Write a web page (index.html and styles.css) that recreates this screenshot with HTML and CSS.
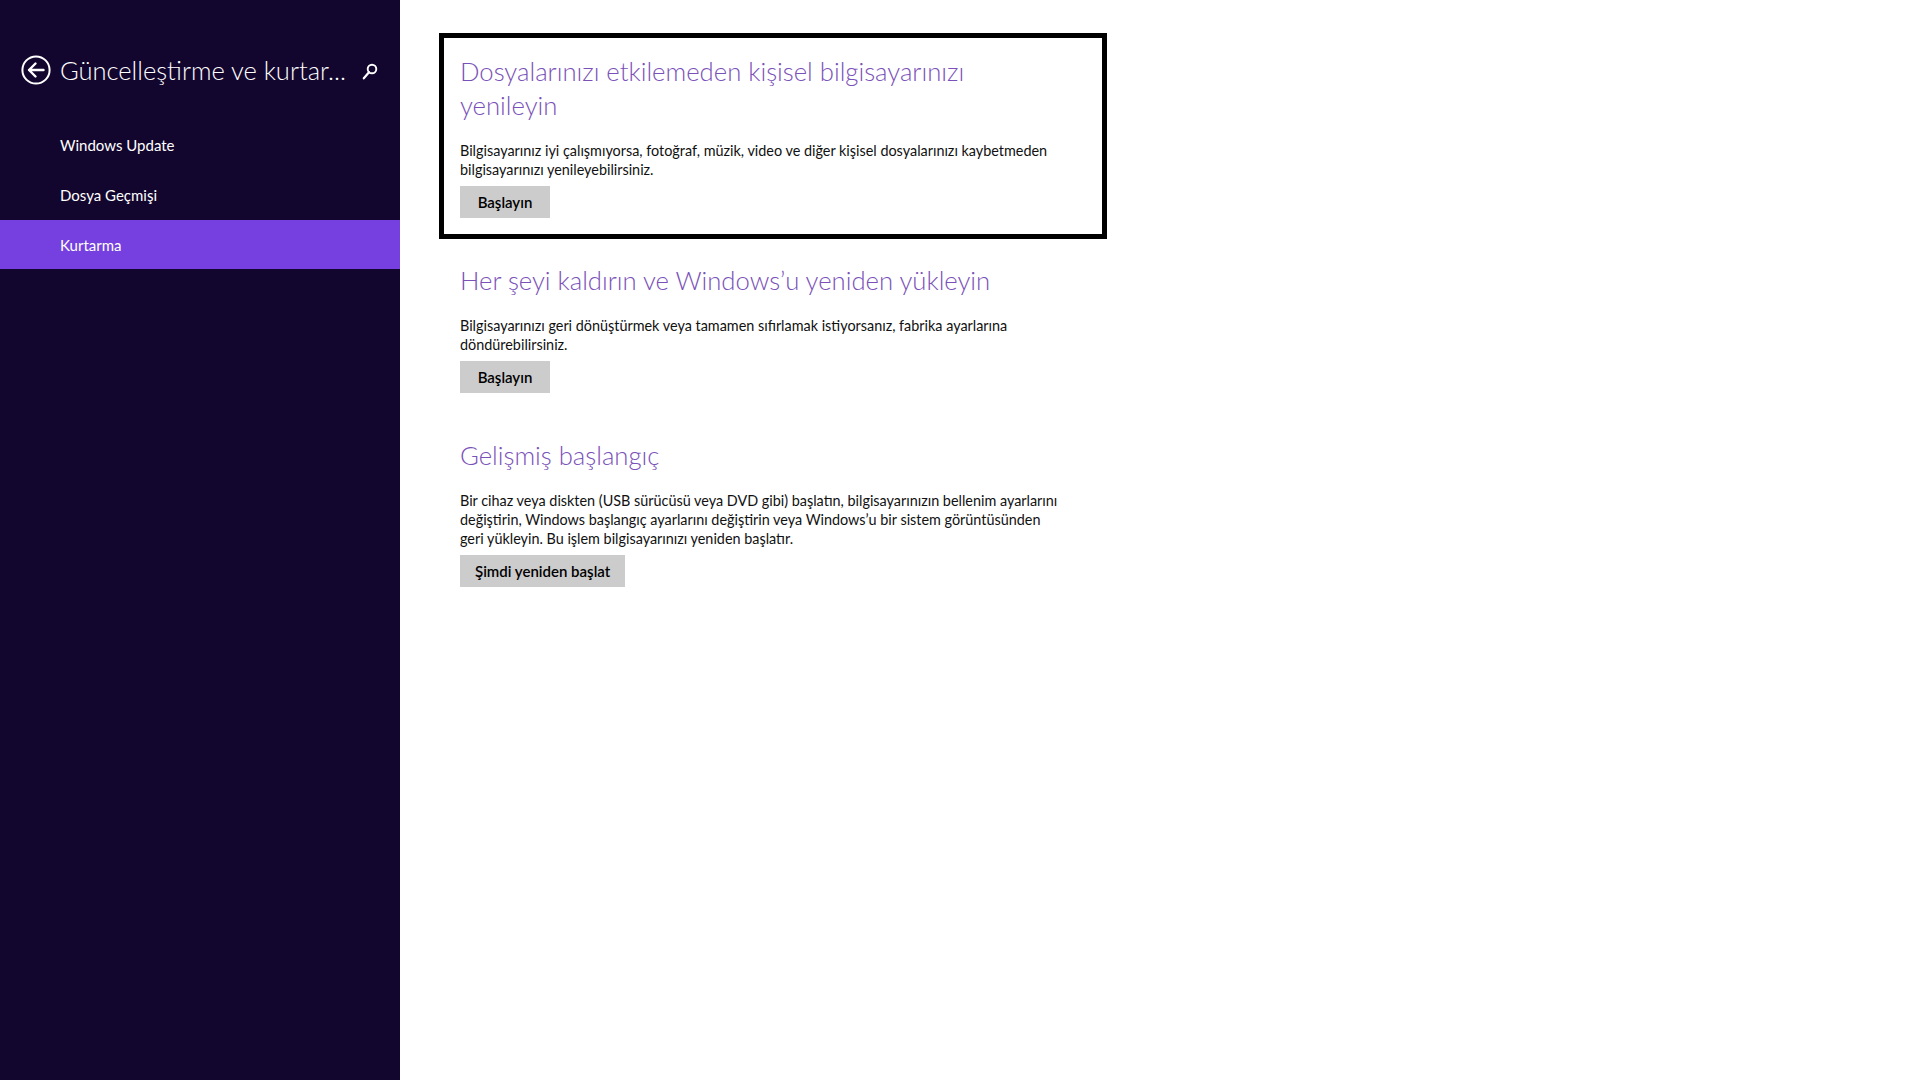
FILE: index.html
```html
<!DOCTYPE html>
<html lang="tr">
<head>
<meta charset="utf-8">
<title>Güncelleştirme ve kurtarma</title>
<link rel="stylesheet" href="styles.css">
</head>
<body>
<div class="app">
  <aside class="sidebar">
    <header class="side-header">
      <svg class="back" width="30" height="30" viewBox="0 0 30 30" aria-hidden="true">
        <circle cx="15" cy="15" r="13.6" fill="none" stroke="#fff" stroke-width="2"/>
        <path d="M8 15 H22.5 M14.5 8.5 L8 15 L14.5 21.5" fill="none" stroke="#fff" stroke-width="2.4" stroke-linecap="round" stroke-linejoin="round"/>
      </svg>
      <h1 class="side-title">Güncelleştirme ve kurtar...</h1>
      <svg class="search" width="16" height="17" viewBox="0 0 16 17" aria-hidden="true">
        <circle cx="10" cy="6" r="4.3" fill="none" stroke="#fff" stroke-width="1.9"/>
        <path d="M7 9.2 L1.8 15.3" fill="none" stroke="#fff" stroke-width="2.2" stroke-linecap="round"/>
      </svg>
    </header>
    <nav class="nav">
      <div class="nav-item">Windows Update</div>
      <div class="nav-item">Dosya Geçmişi</div>
      <div class="nav-item active">Kurtarma</div>
    </nav>
  </aside>
  <main class="content">
    <section class="section focused">
      <h2 class="sec-title">Dosyalarınızı etkilemeden kişisel bilgisayarınızı<br>yenileyin</h2>
      <p class="sec-text">Bilgisayarınız iyi çalışmıyorsa, fotoğraf, müzik, video ve diğer kişisel dosyalarınızı kaybetmeden<br>bilgisayarınızı yenileyebilirsiniz.</p>
      <button class="btn">Başlayın</button>
    </section>
    <section class="section">
      <h2 class="sec-title">Her şeyi kaldırın ve Windows’u yeniden yükleyin</h2>
      <p class="sec-text">Bilgisayarınızı geri dönüştürmek veya tamamen sıfırlamak istiyorsanız, fabrika ayarlarına<br>döndürebilirsiniz.</p>
      <button class="btn">Başlayın</button>
    </section>
    <section class="section">
      <h2 class="sec-title">Gelişmiş başlangıç</h2>
      <p class="sec-text">Bir cihaz veya diskten (USB sürücüsü veya DVD gibi) başlatın, bilgisayarınızın bellenim ayarlarını<br>değiştirin, Windows başlangıç ayarlarını değiştirin veya Windows’u bir sistem görüntüsünden<br>geri yükleyin. Bu işlem bilgisayarınızı yeniden başlatır.</p>
      <button class="btn">Şimdi yeniden başlat</button>
    </section>
  </main>
</div>
</body>
</html>
```
FILE: styles.css
```css
html, body {
  margin: 0;
  padding: 0;
  width: 1920px;
  height: 1080px;
  overflow: hidden;
  background: #ffffff;
  font-family: Lato, "Open Sans", "Liberation Sans", sans-serif;
}

.app {
  display: flex;
  width: 1920px;
  height: 1080px;
}

.sidebar {
  width: 400px;
  flex: 0 0 400px;
  height: 1080px;
  background: #13062e;
  color: #ffffff;
}

.side-header {
  display: flex;
  align-items: center;
  height: 30px;
  margin-top: 55px;
  padding-left: 21px;
  padding-right: 22px;
}

.back {
  flex: 0 0 auto;
  display: block;
}

.side-title {
  flex: 1 1 auto;
  margin: 0 0 0 9px;
  font-size: 25.5px;
  font-weight: 300;
  line-height: 30px;
  white-space: nowrap;
  color: #ffffff;
}

.search {
  flex: 0 0 auto;
  display: block;
  margin-top: 2px;
}

.nav {
  display: flex;
  flex-direction: column;
  margin-top: 35px;
}

.nav-item {
  height: 50px;
  display: flex;
  align-items: center;
  padding-left: 60px;
  font-size: 15px;
  color: #ffffff;
}

.nav-item.active {
  height: 49px;
  background: #7540df;
}

.content {
  flex: 1 1 auto;
  padding: 54px 0 0 60px;
}

.section {
  width: 626px;
  margin-bottom: 45px;
}

.section.focused {
  outline: 5px solid #000000;
  outline-offset: 16px;
}

.sec-title {
  margin: 0;
  font-size: 25.7px;
  font-weight: 300;
  line-height: 34px;
  color: #7a51b8;
  white-space: nowrap;
}

.sec-text {
  margin: 19px 0 0 0;
  font-size: 14.4px;
  line-height: 19px;
  color: #111111;
  white-space: nowrap;
}

.btn {
  display: block;
  margin-top: 7px;
  min-width: 90px;
  height: 32px;
  padding: 0 15px;
  border: none;
  background: #cccccc;
  color: #000000;
  font-family: inherit;
  font-size: 15px;
  font-weight: 600;
}
```
